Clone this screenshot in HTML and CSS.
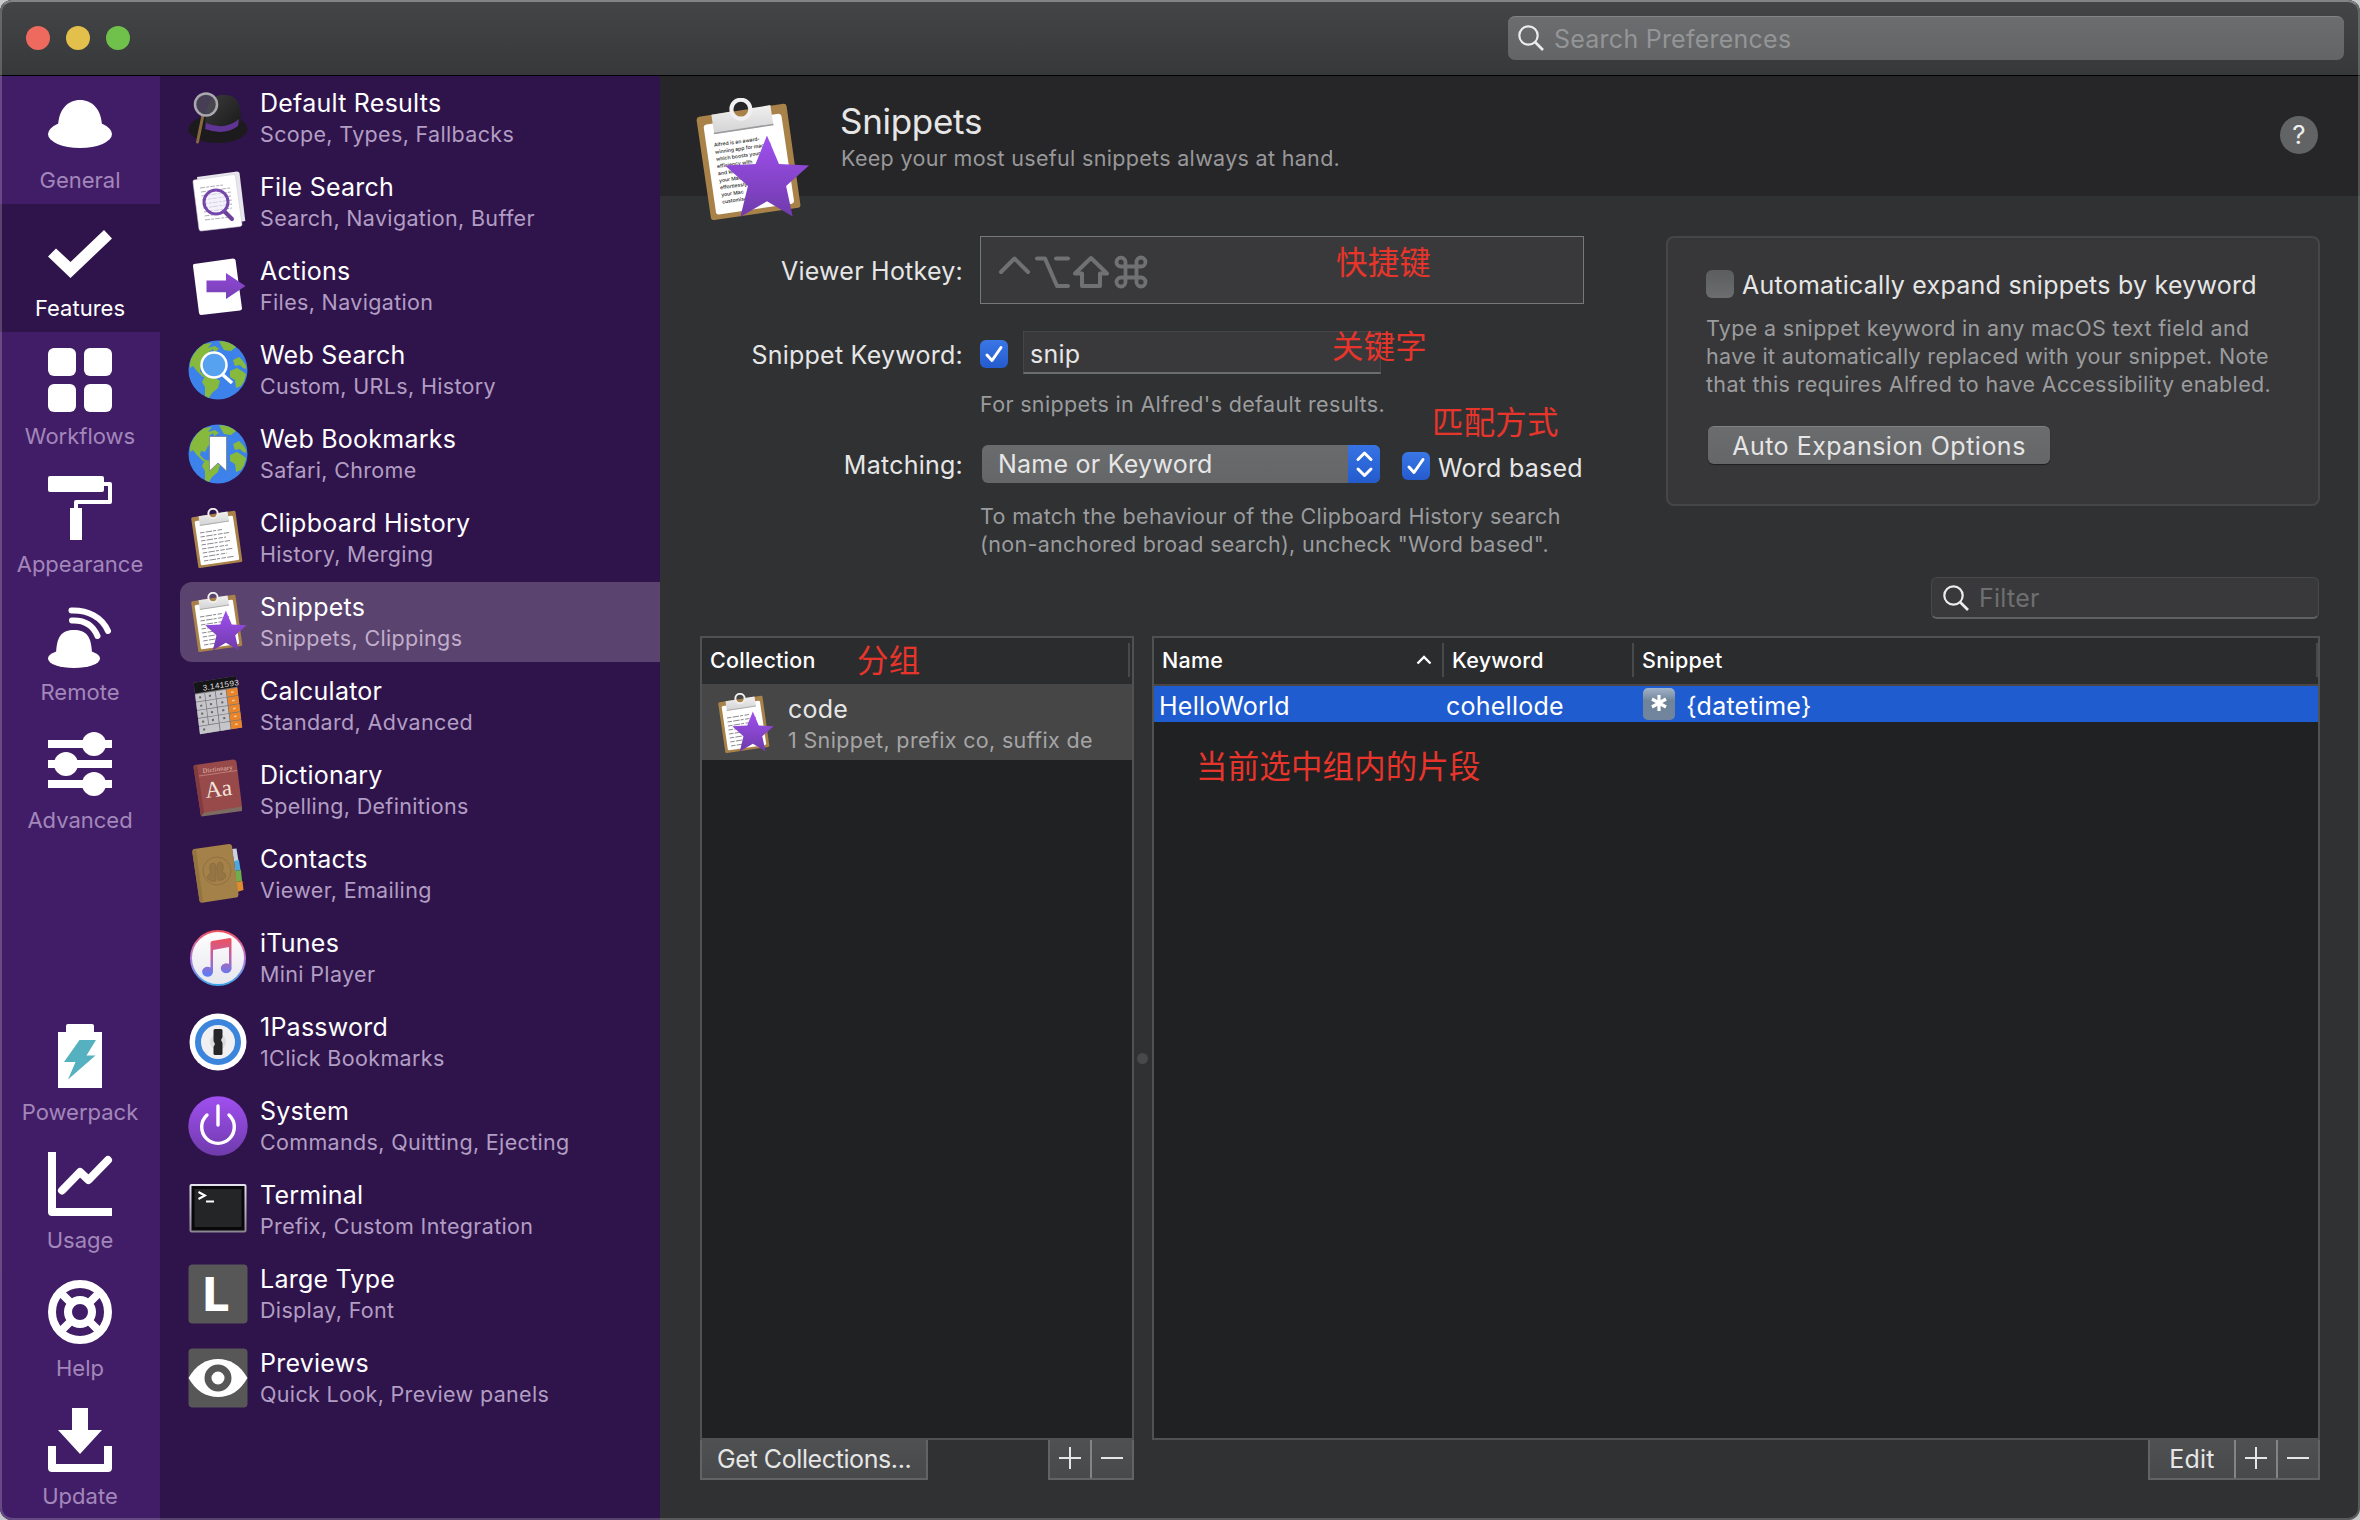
FILE: index.html
```html
<!DOCTYPE html>
<html lang="en">
<head>
<meta charset="utf-8">
<title>Alfred Preferences</title>
<link rel="stylesheet" href="styles.css">
</head>
<body>
<svg class="defs" width="0" height="0" aria-hidden="true">
  <defs>
    <linearGradient id="purple" x1="0" y1="0" x2="0" y2="1"><stop offset="0" stop-color="#a04ff0"/><stop offset="1" stop-color="#6f3bab"/></linearGradient>
    <linearGradient id="arrow" x1="0" y1="0" x2="0" y2="1"><stop offset="0" stop-color="#8f48d6"/><stop offset="1" stop-color="#7740b4"/></linearGradient>
    <linearGradient id="clip" x1="0" y1="0" x2="0" y2="1"><stop offset="0" stop-color="#f0f0f0"/><stop offset="1" stop-color="#d2d2d4"/></linearGradient>
    <linearGradient id="ring" x1="0" y1="0" x2="0" y2="1"><stop offset="0" stop-color="#f0525f"/><stop offset=".5" stop-color="#b77bdb"/><stop offset="1" stop-color="#3fa5ea"/></linearGradient>
    <linearGradient id="note" gradientUnits="userSpaceOnUse" x1="30" y1="12" x2="30" y2="48"><stop offset="0" stop-color="#e85464"/><stop offset=".45" stop-color="#c460a8"/><stop offset="1" stop-color="#5b7df5"/></linearGradient>
    <linearGradient id="disc" x1="0" y1="0" x2="0" y2="1"><stop offset="0" stop-color="#fff"/><stop offset="1" stop-color="#e6e6ee"/></linearGradient>
    <linearGradient id="hat" x1="0" y1="0" x2="1" y2="1"><stop offset="0" stop-color="#3c3c3c"/><stop offset="1" stop-color="#181818"/></linearGradient>
    <linearGradient id="frame" x1="0" y1="0" x2="0" y2="1"><stop offset="0" stop-color="#e4e2ee"/><stop offset="1" stop-color="#8b8590"/></linearGradient>
    <symbol id="board" viewBox="0 0 120 120">
      <path d="M9 18.500L92 5.700Q94.500 5.500 95 8L108.600 105Q109 107.500 106.500 108L24 120Q21 120.300 20.600 118L6.500 22Q6.300 19 9 18.500z" fill="#a9824a"/>
      <path d="M16 26L87 15.500Q89.500 15.300 90 18L102.300 101Q102.500 103.500 100 104L28.500 114.500Q26 114.700 25.600 112.500L13.500 29Q13.300 26.500 16 26z" fill="#fff"/>
      <path d="M21 16.500L40.500 13.400A9.500 9.500 0 0 0 59.500 10.200L79 7L82 26.500L23.800 35.500z" fill="url(#clip)"/>
      <path d="M23.500 35L82 26" stroke="#9a9a9c" stroke-width="1.500"/>
      <circle cx="50" cy="11" r="9.300" fill="none" stroke="#f0f0f0" stroke-width="4"/>
    </symbol>
    <symbol id="lines" viewBox="0 0 120 120">
      <path d="M24 50L68 43M25 58L82 49M26 66L76 58M27 74L84 65M28 82L80 74M29.500 90L90 80.500M30.500 98L78 90M32 106L92 96.500" stroke="#8a8a90" stroke-width="2" stroke-dasharray="9 2.500 13 2 6 3" fill="none"/>
    </symbol>
    <symbol id="star" viewBox="0 0 120 120">
      <path d="M75.700 37L87.500 65L117 66.500L94.500 86.500L101 116.500L75.700 101.500L49.500 117L57 86.500L34.500 66.500L64.500 65z" fill="url(#purple)"/>
    </symbol>
    <symbol id="globe" viewBox="0 0 60 60">
      <circle cx="30" cy="30" r="29.500" fill="#3c82ea"/>
      <path d="M3 19Q8 9 16 4L24 3L20 8L27 6L31 9L25 13L26 18L20 22L17 28L13 27L12 31L18 37L15 37L8 30L5 26L2 28Q1.500 23 3 19zM31 1Q41 1 48 7L43 11L36 10L33 5zM17 36L26 37L32 41L30 48L24 53L21 58L17 56L17 47L14 42zM45 20L51 17L55 21Q58 24 58.500 29L55 28L52 25L47 26zM42 31L49 28L54 31L58 34Q57 41 53 46L48 48L47 40L42 37z" fill="#86b93c"/>
      <path d="M21 12L25 9L27 14L22 17zM45 14L49 13L50 16L46 18z" fill="#3c82ea"/>
    </symbol>
    <symbol id="glass" viewBox="0 0 26 26">
      <circle cx="10.500" cy="10.500" r="9.200" fill="none" stroke="currentColor" stroke-width="2.200"/><path d="M17 17L25 25" stroke="currentColor" stroke-width="2.600"/>
    </symbol>
    <symbol id="tick" viewBox="0 0 28 28"><path d="M7 15L12 20.500L21 7.500" fill="none" stroke="#fff" stroke-width="3" stroke-linecap="round" stroke-linejoin="round"/></symbol>
    <symbol id="plus" viewBox="0 0 22 22"><path d="M0 11H22M11 0V22" stroke="#e6e6e6" stroke-width="2"/></symbol>
    <symbol id="minus" viewBox="0 0 22 22"><path d="M0 11H22" stroke="#e6e6e6" stroke-width="2"/></symbol>
  </defs>
</svg>

<div class="window">
  <header class="titlebar">
    <div class="lights"><span class="light red"></span><span class="light yellow"></span><span class="light green"></span></div>
    <div class="search"><svg class="glass" width="26" height="26"><use href="#glass"/></svg><span>Search Preferences</span></div>
  </header>

  <div class="content">
    <nav class="nav">
      <div class="nav-group">
        <div class="nav-item"><svg viewBox="0 0 64 64"><path d="M10 36C10 17 20 8 32 8S54 17 54 36z"/><ellipse cx="32" cy="42" rx="32" ry="14"/></svg><span>General</span></div>
        <div class="nav-item active"><svg viewBox="0 0 64 64"><path d="M56 10L64 18.500L22.500 58L0 36.500L8 28.500L22.500 42z"/></svg><span>Features</span></div>
        <div class="nav-item"><svg viewBox="0 0 64 64"><rect width="28" height="28" rx="6"/><rect x="36" width="28" height="28" rx="6"/><rect y="36" width="28" height="28" rx="6"/><rect x="36" y="36" width="28" height="28" rx="6"/></svg><span>Workflows</span></div>
        <div class="nav-item"><svg viewBox="0 0 64 64"><rect width="56" height="16" rx="2"/><path d="M55 8H62V26H28V33" fill="none" stroke="#fff" stroke-width="4" stroke-linejoin="round"/><rect x="22" y="32" width="12" height="32"/></svg><span>Appearance</span></div>
        <div class="nav-item"><svg viewBox="0 0 64 64"><path d="M8 52C8 32 14 26 26 26S44 32 44 52z"/><ellipse cx="26" cy="54.500" rx="26" ry="9.500"/><path d="M23.500 6.500C40 6 54 13 60 27M24 16.500C36 16 45 21 49.500 32" fill="none" stroke="#fff" stroke-width="6" stroke-linecap="round"/></svg><span>Remote</span></div>
        <div class="nav-item"><svg viewBox="0 0 64 64"><path d="M0 8H64V16H0zM0 28H64V36H0zM0 48H64V56H0z"/><circle cx="46" cy="12" r="12"/><circle cx="18" cy="32" r="12"/><circle cx="46" cy="52" r="12"/></svg><span>Advanced</span></div>
      </div>
      <div class="nav-group">
        <div class="nav-item"><svg viewBox="0 0 64 64"><path d="M20 0H44Q46 0 46 2V8H54V64H10V8H18V2Q18 0 20 0z"/><path d="M31.500 16H48L38.500 31.500H47.500L20 55.500L27.500 38H16z" fill="#55b1bf"/></svg><span>Powerpack</span></div>
        <div class="nav-item"><svg viewBox="0 0 64 64"><path d="M0 0H8V56H64V64H4Q0 64 0 60z"/><path d="M14 38.500L32 20L40.500 28L60 8" fill="none" stroke="#fff" stroke-width="8" stroke-linecap="round" stroke-linejoin="round"/></svg><span>Usage</span></div>
        <div class="nav-item"><svg viewBox="0 0 64 64"><g fill="none" stroke="#fff"><circle cx="32" cy="32" r="28" stroke-width="8"/><circle cx="32" cy="32" r="12" stroke-width="8"/><path d="M13 13L23 23M41 41L51 51M51 13L41 23M23 41L13 51" stroke-width="8"/></g></svg><span>Help</span></div>
        <div class="nav-item"><svg viewBox="0 0 64 64"><path d="M24 0H40V22H54L32 46L10 22H24zM0 38H8V56H56V38H64V60Q64 64 60 64H4Q0 64 0 60z"/></svg><span>Update</span></div>
      </div>
    </nav>

    <div class="features">
      <div class="feature">
        <svg viewBox="0 0 60 60"><ellipse cx="30" cy="41" rx="29.500" ry="14" fill="#1c1a1c"/><path d="M17 38C18 12 26 6 38 7S53 16 53 36Q40 50 17 38z" fill="url(#hat)"/><path d="M18 35Q37 43 51 31L50 38Q36 48 17 41z" fill="#5f3494"/><path d="M15 27L9.500 54" stroke="#87693f" stroke-width="3" stroke-linecap="round"/><circle cx="18" cy="16.500" r="11" fill="#50505a" fill-opacity=".7" stroke="#a9a9ad" stroke-width="2.500"/></svg>
        <div class="texts"><div class="name">Default Results</div><div class="sub">Scope, Types, Fallbacks</div></div>
      </div>
      <div class="feature">
        <svg viewBox="0 0 60 60"><path d="M9 5L49 -.5Q51 -.5 51.500 1L57.300 49L16 56z" fill="#e8e6ec"/><path d="M6 8L45 2.500Q47 2.500 47.500 4L54 52.500Q54 54 52 54.500L13 59Q11.500 59 11 57L5 10Q5 8 6 8z" fill="#fff" stroke="#cfcbd6" stroke-width=".6"/><path d="M12 16L35 13M13 20L42 16M13.500 24L43 20M14 28L43 24M14.500 32L44 28M15 36L44 32M16 40L44 36M16.500 44L38 41M17 48L42 45" stroke="#a5a1ac" stroke-width=".9" stroke-dasharray="5 1.200 3 1"/><path d="M36 39L44 47" stroke="#6b4298" stroke-width="4" stroke-linecap="round"/><circle cx="28" cy="30" r="12" fill="#eee8fa" fill-opacity=".6" stroke="#7547ad" stroke-width="3"/></svg>
        <div class="texts"><div class="name">File Search</div><div class="sub">Search, Navigation, Buffer</div></div>
      </div>
      <div class="feature">
        <svg viewBox="0 0 60 60"><path d="M6 8L45 2.500Q47 2.500 47.500 4L54 52.500Q54 54 52 54.500L13 59Q11.500 59 11 57L5 10Q5 8 6 8z" fill="#fff"/><path d="M18.500 24.500H38V17L57.500 30L38 43V36.300H18.500z" fill="url(#arrow)"/></svg>
        <div class="texts"><div class="name">Actions</div><div class="sub">Files, Navigation</div></div>
      </div>
      <div class="feature">
        <svg viewBox="0 0 60 60"><use href="#globe"/><path d="M35 35L44 43" stroke="#fff" stroke-width="3.500"/><circle cx="26" cy="25" r="12.500" fill="#57a2f0" stroke="#fff" stroke-width="2.500"/></svg>
        <div class="texts"><div class="name">Web Search</div><div class="sub">Custom, URLs, History</div></div>
      </div>
      <div class="feature">
        <svg viewBox="0 0 60 60"><use href="#globe"/><path d="M21.500 12.500H38.500V47L30 39L21.500 47z" fill="#fff" stroke="#77808c" stroke-width=".8"/></svg>
        <div class="texts"><div class="name">Web Bookmarks</div><div class="sub">Safari, Chrome</div></div>
      </div>
      <div class="feature">
        <svg viewBox="0 0 120 120"><use href="#board"/><use href="#lines"/></svg>
        <div class="texts"><div class="name">Clipboard History</div><div class="sub">History, Merging</div></div>
      </div>
      <div class="feature selected">
        <svg viewBox="0 0 120 120"><use href="#board"/><use href="#lines"/><use href="#star"/></svg>
        <div class="texts"><div class="name">Snippets</div><div class="sub">Snippets, Clippings</div></div>
      </div>
      <div class="feature">
        <svg viewBox="0 0 60 60"><g transform="matrix(1.03 -.165 .123 .99 5.600 6.700)"><rect width="41" height="52" fill="#77777a"/><rect width="41" height="11" fill="#151517"/><text x="8" y="9.500" class="calc-digits">3.141593</text><path d="M0 12H9V19.300H0zM9.700 12H19.200V19.300H9.700zM20 12H29.700V19.300H20zM0 20H9V27.700H0zM9.700 20H19.200V27.700H9.700zM20 20H29.700V27.700H20zM0 28.400H9V35.700H0zM9.700 28.400H19.200V35.700H9.700zM20 28.400H29.700V35.700H20zM0 36.400H9V43.700H0zM9.700 36.400H19.200V43.700H9.700zM20 36.400H29.700V43.700H20zM0 44.400H19.200V52H0zM20 44.400H29.700V52H20z" fill="#c6c6ca"/><path d="M30.500 12H41V19.300H30.500zM30.500 20H41V27.700H30.500zM30.500 28.400H41V35.700H30.500zM30.500 36.400H41V43.700H30.500zM30.500 44.400H41V52H30.500z" fill="#e8852b"/><path d="M3.500 15.500h2M13 15.500h2M24 15.500h2M3.500 24h2M13 24h2M24 24h2M3.500 32h2M13 32h2M24 32h2M3.500 40h2M13 40h2M24 40h2M3.500 48h2" stroke="#66666b" stroke-width="2"/><path d="M34.500 15.500h2.500M34.500 24h2.500M34.500 32h2.500M34.500 40h2.500M34.500 48h2.500" stroke="#f8c795" stroke-width="1.500"/></g></svg>
        <div class="texts"><div class="name">Calculator</div><div class="sub">Standard, Advanced</div></div>
      </div>
      <div class="feature">
        <svg viewBox="0 0 60 60"><path d="M12 52L54 46V51L13.500 56.500z" fill="#7d6a60"/><path d="M7 5L45 -.5Q48 -.5 48.500 2L54 46.500L14 53Q12 54.500 13 56L5.500 7Q5.500 5 7 5z" fill="#984a4a"/><path d="M5.500 7L13 56L16 52.700L9 5z" fill="#823b3f"/><path d="M11 16L49 10.500" stroke="#c48b86" stroke-width=".8"/><text x="15" y="13" transform="rotate(-7 15 13)" class="dict-small">Dictionary</text><text x="18" y="38" transform="rotate(-7 18 38)" class="dict-big">Aa</text></svg>
        <div class="texts"><div class="name">Dictionary</div><div class="sub">Spelling, Definitions</div></div>
      </div>
      <div class="feature">
        <svg viewBox="0 0 60 60"><path d="M44 5L48.500 4.500L50.500 17L46 18z" fill="#c9d3e0"/><path d="M46 17L51 16L52.500 26L47 27z" fill="#4fa8dc"/><path d="M47 27L53 26L54 37L48 38z" fill="#6fae4a"/><path d="M48 38L54.500 37L55.500 46L49 48z" fill="#e08b2c"/><path d="M6 5L41 0Q43.500 0 44 2L50.500 50.500Q50.500 53 48 53.500L14 58.800Q12 59 11.500 57L4.300 8Q4 5.500 6 5z" fill="#a38149"/><path d="M4.300 8L11.500 57L15 58L8 5z" fill="#93733f"/><g fill="#967544" stroke="#8c6c3e" stroke-width=".8"><circle cx="29" cy="27" r="14" fill="none"/><path d="M19 34Q20 30 23 29Q20 22 24 19Q28 19 28 23L28 37Q22 38 19 34zM38 32Q37 28 34 28Q37 21 33 18Q29 18 29 23L30 36Q36 37 38 32z"/></g></svg>
        <div class="texts"><div class="name">Contacts</div><div class="sub">Viewer, Emailing</div></div>
      </div>
      <div class="feature">
        <svg viewBox="0 0 60 60"><circle cx="30" cy="30" r="27" fill="url(#disc)" stroke="url(#ring)" stroke-width="2"/><path d="M22.500 15Q22.500 13.500 24 13L42 10Q43.500 10 43.500 11.500V39A5.500 5 0 1 1 41 36V19L25 22V43A5.500 5 0 1 1 22.500 39.500z" fill="url(#note)"/></svg>
        <div class="texts"><div class="name">iTunes</div><div class="sub">Mini Player</div></div>
      </div>
      <div class="feature">
        <svg viewBox="0 0 60 60"><circle cx="30" cy="30" r="28.500" fill="#fff"/><circle cx="30" cy="30" r="20" fill="#f0f0f2" stroke="#3b86dc" stroke-width="6"/><circle cx="30" cy="30" r="8" fill="#dcdcde"/><path d="M27 17H33Q34.500 17 34.500 18.500V25L33 28L34.500 31V41.500Q34.500 43 33 43H27Q25.500 43 25.500 41.500V35L27 32L25.500 29V18.500Q25.500 17 27 17z" fill="#262628"/></svg>
        <div class="texts"><div class="name">1Password</div><div class="sub">1Click Bookmarks</div></div>
      </div>
      <div class="feature">
        <svg viewBox="0 0 60 60"><circle cx="30" cy="30" r="29.700" fill="url(#purple)"/><path d="M30 10V29M19 19A16.300 16.300 0 1 0 41 19" fill="none" stroke="#fff" stroke-width="3.400" stroke-linecap="round"/></svg>
        <div class="texts"><div class="name">System</div><div class="sub">Commands, Quitting, Ejecting</div></div>
      </div>
      <div class="feature">
        <svg viewBox="0 0 60 60"><rect x="1.500" y="4" width="57" height="48.500" rx="2" fill="url(#frame)"/><rect x="3.500" y="6" width="53" height="44.500" fill="#08080a"/><rect x="6.500" y="9" width="47" height="38" fill="#242527"/><path d="M10.500 12L17 15.500L10.500 19" fill="none" stroke="#fff" stroke-width="2"/><path d="M18 21.500H26" stroke="#fff" stroke-width="2"/></svg>
        <div class="texts"><div class="name">Terminal</div><div class="sub">Prefix, Custom Integration</div></div>
      </div>
      <div class="feature">
        <svg viewBox="0 0 60 60"><rect x=".5" y=".5" width="59" height="59" rx="4" fill="#575757"/><text x="15" y="46.500" class="large-l">L</text></svg>
        <div class="texts"><div class="name">Large Type</div><div class="sub">Display, Font</div></div>
      </div>
      <div class="feature">
        <svg viewBox="0 0 60 60"><rect x=".5" y=".5" width="59" height="59" rx="4" fill="#575757"/><path d="M.5 30C8 17 18 11 30 11S52 17 59.500 30C52 43 42 49 30 49S8 43 .5 30z" fill="#fff"/><circle cx="30" cy="30" r="10" fill="#fff" stroke="#575757" stroke-width="7"/></svg>
        <div class="texts"><div class="name">Previews</div><div class="sub">Quick Look, Preview panels</div></div>
      </div>
    </div>

    <main class="main">
      <div class="header">
        <svg class="header-icon" viewBox="0 0 120 120"><use href="#board"/><g class="note-text"><text x="24" y="48">Alfred is an award-</text><text x="25" y="55">winning app for macOS</text><text x="26" y="62">which boosts your</text><text x="27" y="69">efficiency with</text><text x="28" y="76">and keywords</text><text x="29" y="83">your Mac</text><text x="30" y="90">effortlessly</text><text x="31" y="97">your Mac</text><text x="32" y="104">customise</text></g><use href="#star"/></svg>
        <div class="header-texts"><h1>Snippets</h1><p>Keep your most useful snippets always at hand.</p></div>
        <div class="help">?</div>
      </div>

      <div class="body">
        <div class="top">
          <div class="form">
            <div class="row hotkey-row">
              <label>Viewer Hotkey:</label>
              <div class="hotkey">
                <svg width="150" height="34" viewBox="0 0 150 34" fill="none" stroke="#707173" stroke-width="4" stroke-linejoin="round" stroke-linecap="round"><path d="M3 17L16.500 3.500L30 17"/><path d="M39 3.500H47L59 31H70M58 3.500H70"/><path d="M93 3L109 18.500H102V31H84V18.500H77z"/><path d="M127.500 11.500V22.500M138.500 11.500V22.500M127.500 11.500H138.500M127.500 22.500H138.500M127.500 11.500H122A4.500 4.500 0 1 1 127.500 7zM138.500 11.500V7A4.500 4.500 0 1 1 143 11.500zM127.500 22.500V27A4.500 4.500 0 1 1 123 22.500zM138.500 22.500H143A4.500 4.500 0 1 1 138.500 27z" stroke-width="3.800"/></svg>
              </div>
            </div>
            <div class="row keyword-row">
              <label>Snippet Keyword:</label>
              <span class="check on"><svg width="28" height="28"><use href="#tick"/></svg></span>
              <div class="field">snip</div>
            </div>
            <p class="hint first">For snippets in Alfred's default results.</p>
            <div class="row match-row">
              <label>Matching:</label>
              <div class="select"><span>Name or Keyword</span><svg width="32" height="38" viewBox="0 0 32 38" fill="none" stroke="#fff" stroke-width="3" stroke-linecap="round" stroke-linejoin="round"><path d="M10 14.500L16.500 8L23 14.500M10 24L16.500 30.500L23 24"/></svg></div>
              <span class="check on second"><svg width="28" height="28"><use href="#tick"/></svg></span>
              <span class="check-label">Word based</span>
            </div>
            <p class="hint last">To match the behaviour of the Clipboard History search<br>(non-anchored broad search), uncheck "Word based".</p>
          </div>
          <div class="panel">
            <div class="panel-check"><span class="check"></span><span>Automatically expand snippets by keyword</span></div>
            <p>Type a snippet keyword in any macOS text field and<br>have it automatically replaced with your snippet. Note<br>that this requires Alfred to have Accessibility enabled.</p>
            <div class="button">Auto Expansion Options</div>
          </div>
        </div>

        <div class="filter"><svg class="glass" width="26" height="26"><use href="#glass"/></svg><span>Filter</span></div>

        <div class="tables">
          <section class="collections">
            <div class="table">
              <div class="thead"><span>Collection</span><i class="grip"></i></div>
              <div class="collection">
                <svg width="60" height="60" viewBox="0 0 120 120"><use href="#board"/><use href="#lines"/><use href="#star"/></svg>
                <div><div class="name">code</div><div class="sub">1 Snippet, prefix co, suffix de</div></div>
              </div>
            </div>
            <div class="actions">
              <div class="seg"><span class="get">Get Collections...</span></div>
              <div class="seg"><span class="sq"><svg width="22" height="22"><use href="#plus"/></svg></span><span class="sq"><svg width="22" height="22"><use href="#minus"/></svg></span></div>
            </div>
          </section>
          <div class="splitter"></div>
          <section class="snippets">
            <div class="table">
              <div class="thead cols"><span>Name<svg width="16" height="10" viewBox="0 0 16 10"><path d="M1.500 8.500L8 2L14.500 8.500" fill="none" stroke="#fff" stroke-width="2.400"/></svg></span><span>Keyword</span><span>Snippet</span></div>
              <div class="snippet-row cols"><span>HelloWorld</span><span>cohellode</span><span><b class="key"><svg width="32" height="32" viewBox="0 0 32 32"><path d="M16 7V23M9 11L23 19M23 11L9 19" stroke="#fff" stroke-width="3.200"/></svg></b>{datetime}</span></div>
            </div>
            <div class="actions right">
              <div class="seg"><span class="edit">Edit</span><span class="sq"><svg width="22" height="22"><use href="#plus"/></svg></span><span class="sq"><svg width="22" height="22"><use href="#minus"/></svg></span></div>
            </div>
          </section>
        </div>
      </div>
    </main>
  </div>

  <span class="mark mark-hotkey">快捷键</span>
  <span class="mark mark-keyword">关键字</span>
  <span class="mark mark-matching">匹配方式</span>
  <span class="mark mark-group">分组</span>
  <span class="mark mark-snippets">当前选中组内的片段</span>
  <div class="edge"></div>
</div>
</body>
</html>
```
FILE: styles.css
```css
* { box-sizing: border-box; }
html { background: #c9cacc; }
body { margin: 0; font-family: Inter, "Liberation Sans", "Noto Sans CJK SC", sans-serif; font-size: 25px; letter-spacing: .24px; color: #e6e6e6; }
h1, p { margin: 0; font-weight: 400; }
svg { display: block; flex: none; }
.defs { position: absolute; }

.window { position: relative; width: 2360px; height: 1520px; border-radius: 12px; overflow: hidden; background: #303133; }
.edge { position: absolute; inset: 0; border-radius: 12px; border: 2px solid rgba(255,255,255,.2); border-top-color: rgba(255,255,255,.34); pointer-events: none; }

/* title bar */
.titlebar { height: 76px; padding: 0 16px 0 26px; display: flex; justify-content: space-between; align-items: center; background: linear-gradient(#444547, #373839); border-bottom: 1px solid #000; }
.lights { display: flex; gap: 16px; }
.light { width: 24px; height: 24px; border-radius: 50%; }
.red { background: #ee6a5f; }
.yellow { background: #e2c04b; }
.green { background: #6fc14b; }
.search { width: 836px; height: 44px; border-radius: 7px; padding-left: 10px; display: flex; align-items: center; gap: 10px; background: linear-gradient(#6c6d6f, #636466); border-top: 1px solid #828385; color: #949597; font-size: 25px; }
.search span { padding-top: 2px; }
.glass { color: #ececec; }

.content { display: flex; height: 1444px; }

/* left navigation */
.nav { width: 160px; display: flex; flex-direction: column; justify-content: space-between; background: #421d67; }
.nav-item { height: 128px; padding-top: 16px; display: flex; flex-direction: column; align-items: center; gap: 10px; font-size: 22px; line-height: 28px; color: #a287bb; letter-spacing: 0; }
.nav-item svg { width: 64px; height: 64px; fill: #fff; overflow: visible; }
.nav-item.active { background: #2f144b; color: #fff; }

/* feature list */
.features { width: 500px; padding: 2px 0 0 20px; display: flex; flex-direction: column; gap: 4px; background: #2f144b; }
.feature { height: 80px; padding-left: 8px; display: flex; align-items: center; gap: 12px; border-radius: 12px 0 0 12px; }
.feature.selected { background: #5b436f; }
.feature > svg { width: 60px; height: 60px; overflow: visible; }
.name { line-height: 32px; white-space: nowrap; }
.texts { height: 62px; }
.texts .name { color: #fff; }
.sub { font-size: 21.500px; line-height: 30px; letter-spacing: .34px; white-space: nowrap; }
.texts .sub { color: #b29dc4; }
.selected .texts .sub { color: #c0aecb; }
.calc-digits { font: 8px "Liberation Sans", sans-serif; fill: #ddd; }
.dict-small { font: 6.500px "Liberation Serif", serif; fill: #e5c4bc; }
.dict-big { font: 23px "Liberation Serif", serif; fill: #f3e4dc; letter-spacing: 0; }
.large-l { font: 800 47px Inter, sans-serif; fill: #fff; }

/* main pane */
.main { flex: 1; display: flex; flex-direction: column; }
.header { height: 120px; padding: 22px 42px 0 30px; display: flex; background: #262628; }
.header-icon { width: 122px; height: 122px; overflow: visible; position: relative; }
.note-text text { font: 500 5px Inter, sans-serif; letter-spacing: 0; fill: #222; transform-box: fill-box; transform-origin: 0 100%; transform: rotate(-8deg); }
.header-texts { margin: 1px 0 0 29px; flex: 1; }
.header-texts h1 { font-size: 35px; line-height: 44px; letter-spacing: -.3px; text-indent: -1px; }
.header-texts p { font-size: 21.500px; line-height: 30px; color: #98989a; letter-spacing: .32px; }
.help { width: 38px; height: 38px; margin-top: 18px; border-radius: 50%; background: #626365; text-align: center; line-height: 38px; font-size: 26px; letter-spacing: 0; color: #eee; }

.body { flex: 1; padding: 40px 40px 0 40px; }
.top { height: 341px; display: flex; justify-content: space-between; align-items: flex-start; }
.form { width: 884px; }
.row { display: flex; align-items: center; }
.row label { width: 263px; margin-right: 17px; text-align: right; white-space: nowrap; }
.hotkey-row { height: 68px; }
.hotkey { width: 604px; height: 68px; padding: 18px 0 0 17px; background: #39393b; border: 1px solid #77787a; }
.hotkey-row label { padding-top: 1px; }
.keyword-row { height: 46px; margin-top: 27px; }
.keyword-row label { padding-top: 1px; }
.field { align-self: flex-start; width: 358px; height: 43px; margin-left: 15px; padding-left: 6px; line-height: 45px; background: #39393b; border: 1px solid #454648; border-bottom: 2px solid #6c6d6f; }
.check { width: 28px; height: 28px; border-radius: 6px; background: linear-gradient(#5c5d5f, #6c6d6f); flex: none; }
.check.on { background: linear-gradient(#3a77e6, #245bce); }
.hint { font-size: 21.500px; line-height: 28px; color: #9b9c9e; padding-left: 280px; white-space: nowrap; letter-spacing: .33px; }
.hint.first { margin-top: 13px; }
.match-row { height: 48px; margin-top: 24px; }
.match-row label { padding-bottom: 2px; }
.select { width: 398px; height: 38px; margin: -4px 0 0 2px; padding-left: 16px; display: flex; justify-content: space-between; line-height: 39px; background: linear-gradient(#6a6b6d, #656668); border-radius: 6px; overflow: hidden; white-space: nowrap; }
.select svg { background: linear-gradient(#3673e4, #235bcd); }
.check.second { margin-left: 22px; }
.check-label { margin: 3px 0 0 8px; white-space: nowrap; }
.hint.last { margin-top: 12px; }

.panel { width: 654px; height: 270px; padding: 31px 38px; background: #373739; border: 2px solid #454648; border-radius: 8px; }
.panel-check { height: 30px; display: flex; align-items: center; gap: 8px; white-space: nowrap; }
.panel-check span:last-child { padding-top: 2px; }
.panel p { margin-top: 15px; font-size: 21.500px; line-height: 28px; color: #9b9c9e; white-space: nowrap; letter-spacing: .34px; }
.button { width: 342px; height: 38px; margin: 28px 0 0 2px; text-align: center; line-height: 38px; border-radius: 6px; background: linear-gradient(#6b6c6e, #656668); box-shadow: 0 1px 1px #1e1e20; border-top: 1px solid #808183; white-space: nowrap; letter-spacing: .5px; }

.filter { width: 388px; height: 42px; margin: 0 1px 0 auto; padding-left: 11px; display: flex; align-items: center; gap: 10px; background: #39393b; border: 1px solid #48494b; border-bottom: 2px solid #606163; border-radius: 6px; color: #6e6f71; }

/* tables */
.tables { display: flex; margin-top: 17px; }
.collections { width: 434px; }
.splitter { width: 18px; height: 804px; display: flex; align-items: center; justify-content: center; }
.splitter::after { content: ""; width: 11px; height: 11px; margin: 40px 1px 0 0; border-radius: 50%; background: #48494b; }
.snippets { width: 1168px; }
.table { height: 804px; background: #202122; border: 2px solid #505153; }
.thead { height: 46px; display: flex; justify-content: space-between; align-items: center; padding: 0 0 2px 8px; background: #2b2c2e; font-size: 21.500px; font-weight: 500; color: #fff; }
.grip { width: 2px; height: 34px; margin-right: 2px; background: #48494b; }
.collection { height: 76px; padding: 9px 0 0 13px; display: flex; gap: 13px; background: #464647; }
.collection .sub { line-height: 31px; color: #a5a5a6; }
.cols { display: grid; grid-template-columns: 290px 190px 1fr; padding-left: 0; }
.thead.cols { align-items: center; border-bottom: 0; }
.thead.cols span { height: 34px; line-height: 34px; padding-left: 8px; border-right: 2px solid #48494b; display: flex; justify-content: space-between; align-items: center; padding-right: 10px; }
.snippet-row { height: 38px; border-top: 2px solid #4b4544; background: #1f5ccf; color: #fff; line-height: 41px; }
.snippet-row span { padding-left: 5px; display: flex; height: 36px; }
.snippet-row span:nth-child(2) { padding-left: 2px; }
.snippet-row span:nth-child(3) { padding-left: 9px; }
.key { width: 32px; height: 32px; margin: 2px 11px 0 0; border-radius: 5px; background: linear-gradient(#a3b3c8, #6f8499 40%, #71869e); }
.actions { display: flex; justify-content: space-between; height: 40px; line-height: 38px; }
.actions.right { justify-content: flex-end; }
.seg { display: flex; border: 2px solid #626365; border-top: 0; background: linear-gradient(#4f5052, #48494b); }
.seg span + span { border-left: 2px solid #838486; }
.get { width: 224px; padding-left: 15px; white-space: nowrap; letter-spacing: -.4px; }
.edit { width: 84px; text-align: center; }
.sq { width: 40px; display: flex; justify-content: center; padding-top: 7px; }
.seg .sq + .sq { width: 42px; }
.edit + .sq { width: 42px; }

/* red annotations laid over the window */
.mark { position: absolute; font-family: "Noto Sans CJK SC", sans-serif; font-size: 31.400px; line-height: 40px; color: #e8352b; white-space: nowrap; }
.mark-hotkey { left: 1336px; top: 241px; }
.mark-keyword { left: 1332px; top: 325px; }
.mark-matching { left: 1432px; top: 401px; }
.mark-group { left: 857px; top: 639px; }
.mark-snippets { left: 1196px; top: 745px; }
```
